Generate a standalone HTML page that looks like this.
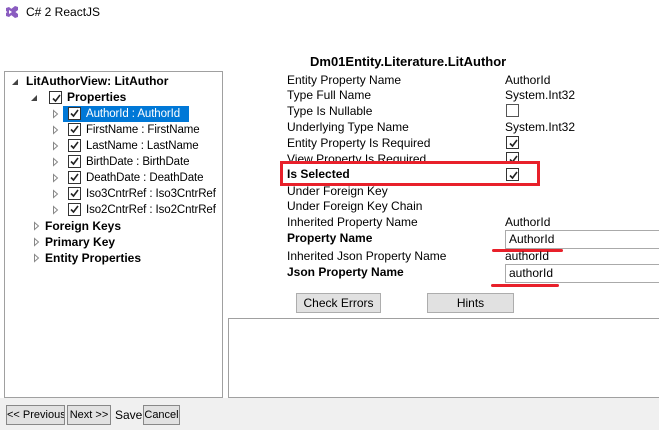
<!DOCTYPE html>
<html><head><style>
*{margin:0;padding:0;box-sizing:border-box}
body{width:659px;height:430px;overflow:hidden;background:#fff;font-family:"Liberation Sans",sans-serif;font-size:12px;color:#000;position:relative}
.a{position:absolute;white-space:nowrap;line-height:15px}
.t{font-size:11.5px;letter-spacing:-0.1px}
.b{font-weight:bold}
.cb{position:absolute;width:13px;height:13px;border:1px solid #333;background:#fff}
.cb svg{position:absolute;left:1px;top:1px}
.btn{position:absolute;background:#e1e1e1;border:1px solid #adadad;text-align:center;line-height:18px;white-space:nowrap;overflow:hidden}
.tb{position:absolute;border:1px solid #aaa;background:#fff;padding-left:3px;line-height:16px}
.red{position:absolute;background:#e8202a;height:3px;border-radius:2px}
</style></head><body>
<svg style="position:absolute;left:5px;top:5px" width="14" height="14" viewBox="0 0 14 14"><path d="M1 3 L4 2 L13 9 L13 12 L10 13 L1 6Z M10 1 L13 2 L13 5 L4 12 L1 11 L1 8Z" fill="#8a5cc0"/><path d="M4 5 L7 7 L4 9Z" fill="#fff"/></svg>
<div class="a" style="left:26px;top:5px">C# 2 ReactJS</div>
<div class="a b" style="left:310px;top:54px;font-size:13px">Dm01Entity.Literature.LitAuthor</div>

<div style="position:absolute;left:4px;top:71px;width:219px;height:327px;border:1px solid #a0a0a0"></div>
<div style="position:absolute;left:0;top:398px;width:659px;height:32px;background:#f0f0f0"></div>
<div style="position:absolute;left:228px;top:318px;width:440px;height:80px;border:1px solid #a0a0a0"></div>

<svg style="position:absolute;left:12px;top:78px" width="8" height="8"><path d="M6 1 L6 7 L0 7Z" fill="#444"/></svg>
<div class="a b" style="left:26px;top:74px">LitAuthorView: LitAuthor</div>
<svg style="position:absolute;left:31px;top:94px" width="8" height="8"><path d="M6 1 L6 7 L0 7Z" fill="#444"/></svg>
<div class="cb" style="left:49px;top:91px"><svg width="11" height="11"><path d="M2 5.5 L4.5 8 L9 2" stroke="#222" stroke-width="1.6" fill="none"/></svg></div>
<div class="a b" style="left:67px;top:90px">Properties</div>

<div style="position:absolute;left:63px;top:106px;width:126px;height:16px;background:#0078d7"></div>
<div class="a t" style="left:86px;top:107px;color:#fff">AuthorId : AuthorId</div>
<div class="a t" style="left:86px;top:123px">FirstName : FirstName</div>
<div class="a t" style="left:86px;top:139px">LastName : LastName</div>
<div class="a t" style="left:86px;top:155px">BirthDate : BirthDate</div>
<div class="a t" style="left:86px;top:171px">DeathDate : DeathDate</div>
<div class="a t" style="left:86px;top:187px">Iso3CntrRef : Iso3CntrRef</div>
<div class="a t" style="left:86px;top:203px">Iso2CntrRef : Iso2CntrRef</div>

<div class="a b" style="left:45px;top:219px">Foreign Keys</div>
<div class="a b" style="left:45px;top:235px">Primary Key</div>
<div class="a b" style="left:45px;top:251px">Entity Properties</div>

<svg style="position:absolute;left:0;top:0" width="100" height="270">
<g fill="#fff" stroke="#888">
<path d="M53.5 110.5 L57.5 114 L53.5 117.5Z"/><path d="M53.5 126.5 L57.5 130 L53.5 133.5Z"/><path d="M53.5 142.5 L57.5 146 L53.5 149.5Z"/><path d="M53.5 158.5 L57.5 162 L53.5 165.5Z"/><path d="M53.5 174.5 L57.5 178 L53.5 181.5Z"/><path d="M53.5 190.5 L57.5 194 L53.5 197.5Z"/><path d="M53.5 206.5 L57.5 210 L53.5 213.5Z"/>
<path d="M34.5 222.5 L38.5 226 L34.5 229.5Z"/><path d="M34.5 238.5 L38.5 242 L34.5 245.5Z"/><path d="M34.5 254.5 L38.5 258 L34.5 261.5Z"/>
</g>
<g fill="#fff" stroke="#333"><rect x="68.5" y="107.5" width="12" height="12"/><rect x="68.5" y="123.5" width="12" height="12"/><rect x="68.5" y="139.5" width="12" height="12"/><rect x="68.5" y="155.5" width="12" height="12"/><rect x="68.5" y="171.5" width="12" height="12"/><rect x="68.5" y="187.5" width="12" height="12"/><rect x="68.5" y="203.5" width="12" height="12"/></g>
<g stroke="#222" stroke-width="1.6" fill="none"><path d="M71 113.5 L73.5 116 L78 110"/><path d="M71 129.5 L73.5 132 L78 126"/><path d="M71 145.5 L73.5 148 L78 142"/><path d="M71 161.5 L73.5 164 L78 158"/><path d="M71 177.5 L73.5 180 L78 174"/><path d="M71 193.5 L73.5 196 L78 190"/><path d="M71 209.5 L73.5 212 L78 206"/></g>
</svg>

<div class="a" style="left:287px;top:73px">Entity Property Name</div><div class="a" style="left:505px;top:73px">AuthorId</div>
<div class="a" style="left:287px;top:88px">Type Full Name</div><div class="a" style="left:505px;top:88px">System.Int32</div>
<div class="a" style="left:287px;top:104px">Type Is Nullable</div><div class="cb" style="left:506px;top:104px;border-color:#555"></div>
<div class="a" style="left:287px;top:120px">Underlying Type Name</div><div class="a" style="left:505px;top:120px">System.Int32</div>
<div class="a" style="left:287px;top:136px">Entity Property Is Required</div><div class="cb" style="left:506px;top:136px"><svg width="11" height="11"><path d="M2 5.5 L4.5 8 L9 2" stroke="#222" stroke-width="1.6" fill="none"/></svg></div>
<div class="a" style="left:287px;top:152px">View Property Is Required</div><div class="cb" style="left:506px;top:152px"><svg width="11" height="11"><path d="M2 5.5 L4.5 8 L9 2" stroke="#222" stroke-width="1.6" fill="none"/></svg></div>
<div class="a" style="left:287px;top:184px">Under Foreign Key</div>
<div style="position:absolute;left:283px;top:163px;width:256px;height:21px;background:#fff"></div>
<div style="position:absolute;left:280px;top:161px;width:260px;height:25px;border:3px solid #e8202a"></div>
<div class="a b" style="left:287px;top:167px">Is Selected</div><div class="cb" style="left:506px;top:168px"><svg width="11" height="11"><path d="M2 5.5 L4.5 8 L9 2" stroke="#222" stroke-width="1.6" fill="none"/></svg></div>
<div class="a" style="left:287px;top:199px">Under Foreign Key Chain</div>
<div class="a" style="left:287px;top:215px">Inherited Property Name</div><div class="a" style="left:505px;top:215px">AuthorId</div>
<div class="a b" style="left:287px;top:231px">Property Name</div><div class="tb" style="left:505px;top:230px;width:160px;height:19px">AuthorId</div>
<div class="red" style="left:492px;top:249px;width:71px"></div>
<div class="a" style="left:287px;top:249px">Inherited Json Property Name</div><div class="a" style="left:505px;top:249px">authorId</div>
<div class="a b" style="left:287px;top:265px">Json Property Name</div><div class="tb" style="left:505px;top:264px;width:160px;height:19px">authorId</div>
<div class="red" style="left:491px;top:284px;width:68px"></div>

<div class="btn" style="left:296px;top:293px;width:85px;height:20px">Check Errors</div>
<div class="btn" style="left:427px;top:293px;width:87px;height:20px">Hints</div>

<div class="btn" style="left:6px;top:405px;width:59px;height:20px;border-color:#888;font-size:11px">&lt;&lt; Previous</div>
<div class="btn" style="left:67px;top:405px;width:44px;height:20px;border-color:#888;font-size:11px">Next &gt;&gt;</div>
<div class="a" style="left:115px;top:408px">Save</div>
<div class="btn" style="left:143px;top:405px;width:37px;height:20px;border-color:#888;font-size:11px">Cancel</div>
</body></html>
